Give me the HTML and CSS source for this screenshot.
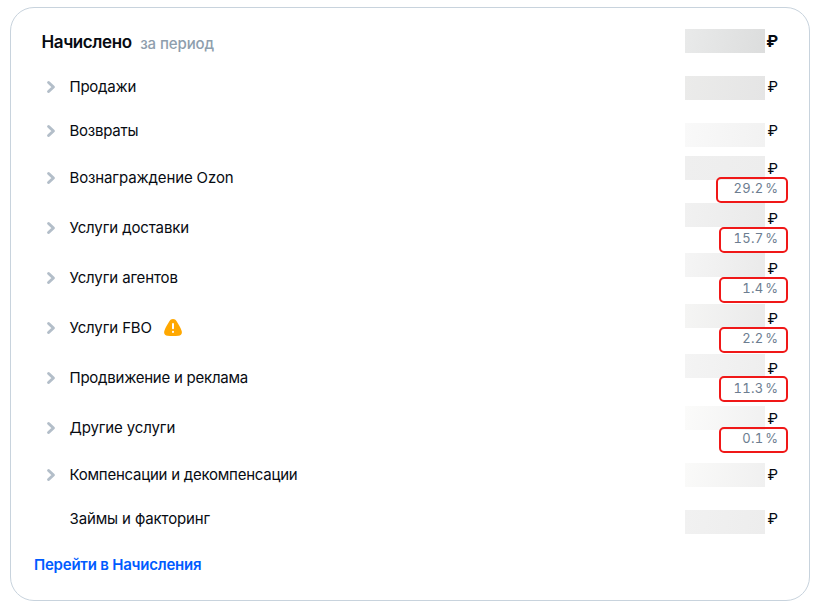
FILE: index.html
```
<!DOCTYPE html>
<html lang="ru">
  <head>
    <meta charset="UTF-8" />
    <meta name="viewport" content="width=device-width, initial-scale=1.0" />
    <title>Начислено</title>
    <link rel="stylesheet" href="styles.css">
  </head>
  <body>
    <svg class="sprite" width="0" height="0">
      <symbol id="chevron" viewBox="0 0 10 14">
        <path d="M2.6 2.5 7.400 7 2.600 11.500" fill="none" stroke="currentColor" stroke-width="3" stroke-linecap="round" stroke-linejoin="round" />
      </symbol>
    </svg>

    <section class="card">
      <header class="head">
        <h1 class="title">Начислено</h1>
        <span class="period">за период</span>
        <span class="total"><i class="mask mask-total"></i>₽</span>
      </header>

      <ul class="list">
        <li class="row">
          <svg class="chevron"><use href="#chevron" /></svg>
          <span class="name">Продажи</span>
          <span class="value"><i class="mask mask-sales"></i>₽</span>
        </li>
        <li class="row">
          <svg class="chevron"><use href="#chevron" /></svg>
          <span class="name">Возвраты</span>
          <span class="value"><i class="mask mask-returns"></i>₽</span>
        </li>
        <li class="row tall">
          <svg class="chevron"><use href="#chevron" /></svg>
          <span class="name loose">Вознаграждение Ozon</span>
          <span class="value"><i class="mask mask-fee"></i>₽<small class="percent">29.2 %</small></span>
          <i class="frame wide"></i>
        </li>
        <li class="row tall">
          <svg class="chevron"><use href="#chevron" /></svg>
          <span class="name loose">Услуги доставки</span>
          <span class="value"><i class="mask mask-delivery"></i>₽<small class="percent">15.7 %</small></span>
          <i class="frame"></i>
        </li>
        <li class="row tall">
          <svg class="chevron"><use href="#chevron" /></svg>
          <span class="name loose">Услуги агентов</span>
          <span class="value"><i class="mask mask-agents"></i>₽<small class="percent">1.4 %</small></span>
          <i class="frame"></i>
        </li>
        <li class="row tall">
          <svg class="chevron"><use href="#chevron" /></svg>
          <span class="name loose">Услуги FBO</span>
          <svg class="warning" viewBox="0 0 18 17">
            <path d="M9 0C7.400 0 6.300.7 5.400 2.200 3.600 5 1.600 8.300.5 11.400-.6 14.800.8 16.500 3.500 16.700 7 17.100 11 17.100 14.500 16.700 17.200 16.500 18.600 14.800 17.500 11.400 16.400 8.300 14.400 5 12.600 2.200 11.700.7 10.600 0 9 0Z" fill="#ffa800" />
            <path d="M9 4.900v4.400M9 12.700v.4" stroke="#fff" stroke-width="2" stroke-linecap="round" />
          </svg>
          <span class="value"><i class="mask mask-fbo"></i>₽<small class="percent">2.2 %</small></span>
          <i class="frame"></i>
        </li>
        <li class="row tall">
          <svg class="chevron"><use href="#chevron" /></svg>
          <span class="name">Продвижение и реклама</span>
          <span class="value"><i class="mask mask-promo"></i>₽<small class="percent">11.3 %</small></span>
          <i class="frame raised"></i>
        </li>
        <li class="row tall">
          <svg class="chevron"><use href="#chevron" /></svg>
          <span class="name loose">Другие услуги</span>
          <span class="value"><i class="mask mask-other"></i>₽<small class="percent">0.1 %</small></span>
          <i class="frame"></i>
        </li>
        <li class="row">
          <svg class="chevron"><use href="#chevron" /></svg>
          <span class="name">Компенсации и декомпенсации</span>
          <span class="value"><i class="mask mask-comp"></i>₽</span>
        </li>
        <li class="row">
          <span class="chevron"></span>
          <span class="name loose">Займы и факторинг</span>
          <span class="value"><i class="mask mask-loans"></i>₽</span>
        </li>
      </ul>

      <a class="link" href="#">Перейти в Начисления</a>
    </section>
  </body>
</html>
```
FILE: styles.css
```
* {
  box-sizing: border-box;
}
body {
  margin: 0;
  padding: 7px 12px 0 10px;
  background: #fff;
  color: #070b12;
  font: 15px/20px Inter, "Noto Sans", sans-serif;
}
.sprite {
  position: absolute;
}
.card {
  height: 594px;
  padding: 11px 20px 0 23px;
  border: 1px solid #c8d3dd;
  border-radius: 24px;
}
.head {
  position: relative; /* Needed for the mask */
  display: flex;
  align-items: center;
  height: 46px;
  padding: 0 11px 0 7.5px;
}
.title {
  margin: 0;
  font-size: 17px;
  font-weight: 600;
  line-height: 22px;
  letter-spacing: -0.4px;
}
.period {
  margin: 3px 0 0 8.5px;
  color: #8e9ead;
  font-weight: 500;
  letter-spacing: -0.1px;
}
.total {
  margin: -2px 0 0 auto;
  font-size: 16px;
  font-weight: 700;
}
.list {
  margin: 0;
  padding: 0;
  list-style: none;
}
.row {
  position: relative; /* Needed for the mask and the frame */
  display: flex;
  align-items: center;
  height: 44px;
  padding: 0 11px 0 12px;
}
.tall {
  height: 50px;
}
.chevron {
  width: 10px;
  height: 14px;
  margin-right: 13.5px;
  color: #b3bec9;
}
.name {
  letter-spacing: -0.24px;
  white-space: nowrap;
}
.loose {
  letter-spacing: -0.13px;
}
.warning {
  width: 18px;
  height: 17px;
  margin: -1px 0 0 12px;
}
.value {
  display: flex;
  flex-direction: column;
  align-items: flex-end;
  margin-left: auto;
}
.tall .value {
  padding-top: 2px;
}
.percent {
  margin: -1px -0.3px 1px 0;
  color: #6c7d90;
  font-size: 13px;
  font-variant-numeric: tabular-nums;
  letter-spacing: 0.3px;
  word-spacing: -2px;
}

/* Hidden amounts */
.mask {
  position: absolute;
  right: 24px;
  width: 80px;
  height: 24px;
}
.mask-total { top: 10px; background: linear-gradient(100deg, #e9eaea, #dcdddd); }
.mask-sales { top: 11px; background: linear-gradient(100deg, #ebebea, #e5e5e5); }
.mask-returns { top: 14px; background: linear-gradient(100deg, #f9f9f9, #f2f2f2); }
.mask-fee { top: 3px; background: linear-gradient(100deg, #efefef, #ededed); }
.mask-delivery { top: 0; background: linear-gradient(100deg, #f1f1f1, #eaeaea); }
.mask-agents { top: 0; background: linear-gradient(100deg, #f5f5f5, #eaeaea); }
.mask-fbo { top: 1px; background: linear-gradient(100deg, #f5f5f4, #eaeaea); }
.mask-promo { top: 1px; background: linear-gradient(100deg, #f4f4f4, #eeeeee); }
.mask-other { top: 3px; background: linear-gradient(100deg, #fbfbfa, #f1f1f1); }
.mask-comp { top: 10px; background: linear-gradient(100deg, #fafaf9, #f0f0f0); }
.mask-loans { top: 13px; background: linear-gradient(100deg, #f1f1f1, #ededed); }

/* Red highlight around the percent */
.frame {
  position: absolute;
  top: 24px;
  right: 1px;
  width: 69px;
  height: 26px;
  border: 2px solid #f01818;
  border-radius: 5px;
}
.wide {
  width: 72px;
}
.raised {
  top: 23px;
}
.link {
  display: inline-block;
  margin-top: 14px;
  color: #005bff;
  font-weight: 600;
  letter-spacing: -0.22px;
  text-decoration: none;
}
```
